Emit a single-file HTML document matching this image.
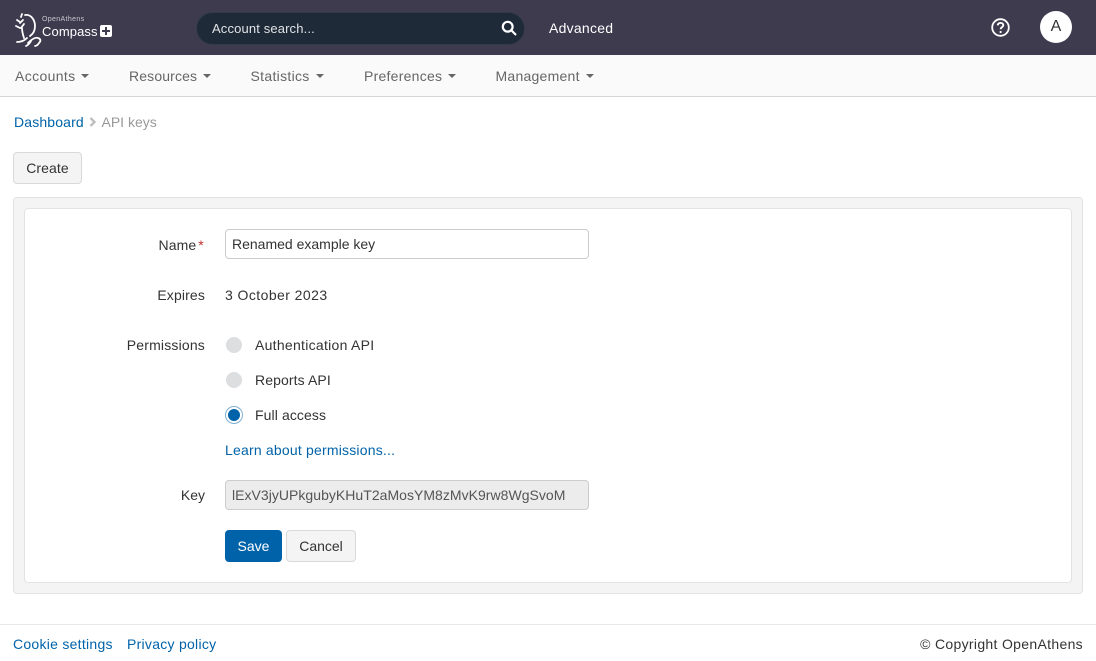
<!DOCTYPE html>
<html><head><meta charset="utf-8"><style>
*{box-sizing:border-box}
html,body{margin:0;padding:0;width:1096px;height:661px;overflow:hidden;background:#fff;font-family:"Liberation Sans",sans-serif;font-size:14px;color:#333}
.a{position:absolute;white-space:nowrap;line-height:20px}
.l{color:#0063a9}
.nav{color:#666}
.car{position:absolute;top:74px;width:0;height:0;border-left:4px solid transparent;border-right:4px solid transparent;border-top:4px solid #666}
.r{text-align:right;width:120px;left:85px}
.box{position:absolute;border-radius:4px}
.radio{position:absolute;left:226px;width:16px;height:16px;border-radius:50%;background:#dddee0}
</style></head><body>
<div class="box" style="left:0;top:0;width:1096px;height:55px;background:#3e3b4f;border-radius:0"></div>
<svg style="position:absolute;left:14px;top:11px" width="30" height="37" viewBox="0 0 30 37" fill="none" stroke="#fff" stroke-width="1.8" stroke-linecap="round">
<path d="M11 4C17 3 21 9 21 15C21 20 19 23 16 25"/><path d="M8 17C8 21 9 24 10 27"/><path d="M8 3l-1 3M3 9l3 2M9 9l-3 3M2 15l4 2M10 13l-3 4"/><path d="M3 31c4 0 7-1 10-4"/><path d="M14 32c3-3 7-6 10-5 3 1 3 3 1 5-1 2-3 3-4 3"/><path d="M12 35c2-1 4-3 5-5"/></svg>
<div class="a" style="left:42px;top:15px;font-size:7px;line-height:9px;color:#c8c8cf;letter-spacing:.35px">OpenAthens</div>
<div class="a" style="left:42px;top:24px;font-size:13px;line-height:16px;color:#fff;letter-spacing:.1px">Compass</div>
<div class="box" style="left:100px;top:25px;width:12px;height:12px;background:#fff;border-radius:2px"></div>
<div class="box" style="left:105px;top:27px;width:2px;height:8px;background:#3e3b4f;border-radius:0"></div>
<div class="box" style="left:102px;top:30px;width:8px;height:2px;background:#3e3b4f;border-radius:0"></div>

<div class="box" style="left:196px;top:12px;width:329px;height:33px;background:#1e2a38;border-radius:17px;border:1px solid #333a4c"></div>
<div class="a" style="left:212px;top:19px;font-size:13px;color:#e0e2e5;letter-spacing:.14px">Account search...</div>
<svg style="position:absolute;left:501px;top:20px" width="16" height="16" viewBox="0 0 16 16" fill="none" stroke="#fff" stroke-width="2.2" stroke-linecap="round"><circle cx="6.7" cy="6.7" r="4.9"/><path d="M10.4 10.4l4 4"/></svg>
<div class="a" style="left:549px;top:18px;color:#fff;letter-spacing:.25px">Advanced</div>
<svg style="position:absolute;left:991px;top:18px" width="19" height="19" viewBox="0 0 19 19" fill="none" stroke="#fff" stroke-width="1.8"><circle cx="9.5" cy="9.5" r="8.3"/><path d="M6.7 7.4c.2-1.7 1.3-2.5 2.9-2.5 1.6 0 2.7 1 2.7 2.3 0 2-2.7 2-2.7 4" stroke-width="1.9"/><circle cx="9.6" cy="14" r="1.1" fill="#fff" stroke="none"/></svg>
<div class="box" style="left:1040px;top:11px;width:32px;height:32px;background:#fff;border-radius:50%"></div>
<div class="a" style="left:1040px;top:17px;width:32px;text-align:center;font-size:16px;color:#333">A</div>

<div class="box" style="left:0;top:55px;width:1096px;height:42px;background:#fafafa;border-bottom:1px solid #d6d6d6;border-radius:0"></div>
<div class="a nav" style="left:15px;top:66px;letter-spacing:.37px">Accounts</div><div class="car" style="left:81px"></div>
<div class="a nav" style="left:129px;top:66px;letter-spacing:.14px">Resources</div><div class="car" style="left:203px"></div>
<div class="a nav" style="left:250.5px;top:66px;letter-spacing:.31px">Statistics</div><div class="car" style="left:316px"></div>
<div class="a nav" style="left:364px;top:66px;letter-spacing:.25px">Preferences</div><div class="car" style="left:448px"></div>
<div class="a nav" style="left:495.5px;top:66px;letter-spacing:.25px">Management</div><div class="car" style="left:586px"></div>

<div class="a l" style="left:14px;top:112px;letter-spacing:.15px">Dashboard</div>
<svg style="position:absolute;left:89px;top:117px" width="8" height="10" viewBox="0 0 8 10" fill="none" stroke="#bdbdbd" stroke-width="2.3"><path d="M1.5 1l4 4-4 4"/></svg>
<div class="a" style="left:101.5px;top:112px;color:#999">API keys</div>

<div class="box" style="left:13px;top:152px;width:69px;height:32px;background:#f4f4f4;border:1px solid #d9d9d9"></div>
<div class="a" style="left:13px;top:158px;width:69px;text-align:center;letter-spacing:.1px">Create</div>

<div class="box" style="left:13px;top:197px;width:1070px;height:397px;background:#f4f4f4;border:1px solid #e3e3e3"></div>
<div class="box" style="left:24px;top:208px;width:1048px;height:375px;background:#fff;border:1px solid #e3e3e3"></div>

<div class="a" style="left:158.5px;top:235px;letter-spacing:.1px">Name<span style="color:#c0312f;margin-left:2px">*</span></div>
<div class="box" style="left:225px;top:229px;width:364px;height:30px;background:#fff;border:1px solid #ccc"></div>
<div class="a" style="left:232px;top:234px">Renamed example key</div>

<div class="a r" style="top:285px;letter-spacing:.14px">Expires</div>
<div class="a" style="left:225px;top:285px;letter-spacing:.43px">3 October 2023</div>

<div class="a r" style="top:335px;letter-spacing:.18px">Permissions</div>
<div class="radio" style="top:337px"></div>
<div class="a" style="left:255px;top:335px;letter-spacing:.28px">Authentication API</div>
<div class="radio" style="top:372px"></div>
<div class="a" style="left:255px;top:370px;letter-spacing:.1px">Reports API</div>
<div class="radio" style="top:407px;background:#0063a9;border:2px solid #fff;box-shadow:0 0 0 1px #7fb1d4"></div>
<div class="a" style="left:255px;top:405px;letter-spacing:.1px">Full access</div>
<div class="a l" style="left:225px;top:440px;letter-spacing:.2px">Learn about permissions...</div>

<div class="a r" style="top:485px">Key</div>
<div class="box" style="left:225px;top:480px;width:364px;height:30px;background:#ececec;border:1px solid #ccc"></div>
<div class="a" style="left:232px;top:485px;color:#555;letter-spacing:.03px">lExV3jyUPkgubyKHuT2aMosYM8zMvK9rw8WgSvoM</div>

<div class="box" style="left:225px;top:530px;width:57px;height:32px;background:#0063a9"></div>
<div class="a" style="left:225px;top:536px;width:57px;text-align:center;color:#fff">Save</div>
<div class="box" style="left:286px;top:530px;width:70px;height:32px;background:#f4f4f4;border:1px solid #d9d9d9"></div>
<div class="a" style="left:286px;top:536px;width:70px;text-align:center">Cancel</div>

<div class="box" style="left:0;top:624px;width:1096px;height:1px;background:#e8e8e8;border-radius:0"></div>
<div class="a l" style="left:13px;top:634px;letter-spacing:.27px">Cookie settings</div>
<div class="a l" style="left:127px;top:634px;letter-spacing:.27px">Privacy policy</div>
<div class="a" style="right:13px;top:634px;letter-spacing:.32px">© Copyright OpenAthens</div>
</body></html>
